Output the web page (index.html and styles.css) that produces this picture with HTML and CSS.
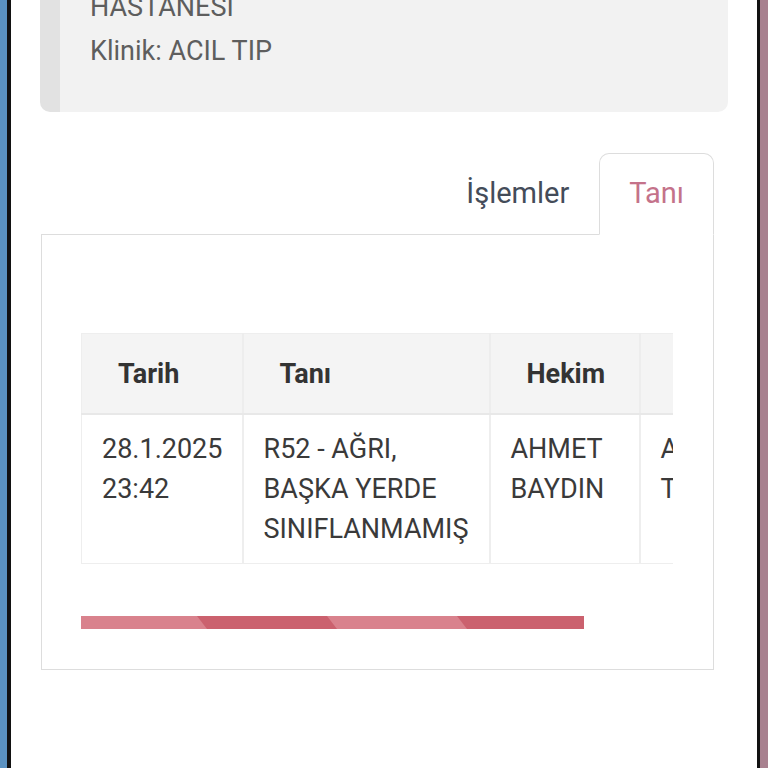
FILE: index.html
```html
<!DOCTYPE html>
<html lang="tr">
<head>
<meta charset="utf-8">
<title>Tanı</title>
<link rel="stylesheet" href="styles.css">
</head>
<body>
<div class="device">
  <div class="edge-left"></div>
  <div class="bezel-left"></div>
  <main class="screen">
    <section class="info-card">
      <div class="info-line">HASTANESI</div>
      <div class="info-line">Klinik: ACIL TIP</div>
    </section>

    <nav class="tabs">
      <div class="tab">İşlemler</div>
      <div class="tab tab-active">Tanı</div>
    </nav>

    <section class="tab-panel">
      <div class="table-scroll">
        <table class="diag-table">
          <colgroup>
            <col class="c1"><col class="c2"><col class="c3"><col class="c4">
          </colgroup>
          <thead>
            <tr>
              <th>Tarih</th>
              <th>Tanı</th>
              <th>Hekim</th>
              <th>Klinik</th>
            </tr>
          </thead>
          <tbody>
            <tr>
              <td>28.1.2025 23:42</td>
              <td>R52 - AĞRI, BAŞKA YERDE SINIFLANMAMIŞ</td>
              <td>AHMET BAYDIN</td>
              <td>ACIL TIP</td>
            </tr>
          </tbody>
        </table>
      </div>
      <div class="scrollbar">
        <svg class="thumb" width="503" height="13" viewBox="0 0 503 13" aria-hidden="true">
          <rect x="0" y="0" width="503" height="13" fill="#d9828d"/>
          <polygon points="116,0 246,0 256,13 126,13" fill="#cb616e"/>
          <polygon points="376,0 503,0 503,13 386,13" fill="#cb616e"/>
        </svg>
      </div>
    </section>
  </main>
  <div class="bezel-right"></div>
  <div class="edge-right"></div>
</div>
</body>
</html>
```

FILE: styles.css
```css
* { box-sizing: border-box; }

html, body {
  margin: 0;
  padding: 0;
  height: 768px;
  overflow: hidden;
  background: #ffffff;
}

body {
  font-family: Roboto, "Noto Sans", "Liberation Sans", sans-serif;
  font-size: 27px;
  font-weight: 400;
  color: #3a3a3a;
}

.device {
  display: flex;
  height: 768px;
}

.edge-left { width: 7px; background: #5b92c1; flex: none; }
.bezel-left { width: 4px; background: #121212; flex: none; }
.bezel-right { width: 3px; background: #121212; flex: none; }
.edge-right { width: 8px; background: #a8818f; flex: none; }

.screen {
  flex: 1;
  background: #ffffff;
  overflow: hidden;
}

/* top info card (scrolled partially off screen) */
.info-card {
  margin: -31px 29px 0 29px;
  padding: 16px 20px 39px 30px;
  background: #f2f2f2;
  border-left: 20px solid #e2e2e2;
  border-radius: 10px;
  color: #5e5e5e;
}

.info-line {
  line-height: 44px;
}

/* tabs */
.tabs {
  display: flex;
  justify-content: flex-end;
  margin: 41px 43px 0 0;
  position: relative;
  z-index: 1;
}

.tab {
  font-size: 29px;
  padding: 19px 29px 21px;
  line-height: 40px;
  border: 1px solid transparent;
  border-radius: 10px 10px 0 0;
  color: #444c59;
  margin-bottom: -1px;
}

.tab-active {
  border-color: #dddddd;
  border-bottom-color: #ffffff;
  background: #ffffff;
  color: #c4728a;
}

/* panel */
.tab-panel {
  margin: 0 43px 0 30px;
  border: 1px solid #dddddd;
  padding: 98px 40px 40px 39px;
}

.table-scroll {
  overflow: hidden;
  width: 592px;
}

.diag-table {
  border-collapse: collapse;
  table-layout: fixed;
  width: 688px;
  border: 1px solid #eeeeee;
}

.c1 { width: 161px; }
.c2 { width: 247px; }
.c3 { width: 150px; }
.c4 { width: 130px; }

.diag-table th {
  background: #f4f4f4;
  font-weight: 700;
  text-align: left;
  line-height: 40px;
  padding: 20px 15px 19px 36px;
  border-right: 2px solid #ededed;
  border-bottom: 2px solid #e8e8e8;
  color: #333333;
}

.diag-table td {
  vertical-align: top;
  line-height: 40px;
  padding: 14px 12px 14px 20px;
  border-right: 2px solid #eeeeee;
  color: #3a3a3a;
}

.scrollbar {
  margin-top: 52px;
  height: 13px;
}

.thumb {
  display: block;
}
```
